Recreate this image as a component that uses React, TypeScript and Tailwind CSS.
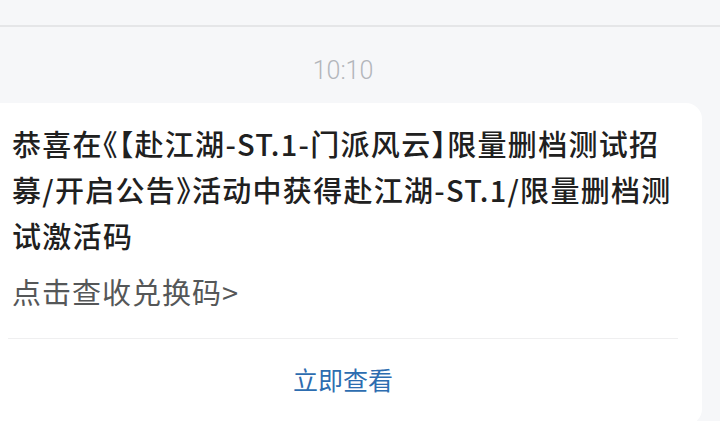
import React from "react";

const cjk = "font-['Noto_Sans_CJK_SC','Noto_Sans',sans-serif]";

// 书名号、方括号用半角宽度
function P({ children }: { children: React.ReactNode }) {
  return <span className="[font-feature-settings:'halt']">{children}</span>;
}

export default function App() {
  return (
    <div className={`min-h-screen bg-[#f6f7f9] overflow-hidden ${cjk}`}>
      {/* 顶部栏分隔线 */}
      <div className="h-[25px]" />
      <div className="h-[2px] bg-[#e5e6e8]" />

      <div className="w-[718px] -ml-4">
        {/* 时间 */}
        <div className="flex justify-center pt-[30px] pb-[18px]">
          <span className="font-['Roboto',sans-serif] font-light text-[25px] leading-[28px] text-[#b3b6bb]">
            10:10
          </span>
        </div>

        {/* 消息卡片 */}
        <div className="bg-white rounded-2xl pt-[17px] pb-6">
          <div className="px-7">
            <p className="text-[29px] leading-[46px] tracking-[1.3px] font-medium text-[#202020]">
              恭喜在<P>《【</P>赴江湖-ST.1-门派风云<P>】</P>限量删档测试招
              <br />
              募/开启公告<P>》</P>活动中获得赴江湖-ST.1/限量删档测
              <br />
              试激活码
            </p>
            <p className="mt-[10px] text-[29px] leading-[46px] tracking-[1px] text-[#555758]">
              点击查收兑换码&gt;
            </p>
          </div>
          <div className="mx-6 mt-[24px] h-px bg-[#efeff0]" />
          <div className="flex justify-center pt-[18px]">
            <button className="text-[25px] leading-[44px] text-[#2d6db0]">立即查看</button>
          </div>
        </div>
      </div>
    </div>
  );
}
